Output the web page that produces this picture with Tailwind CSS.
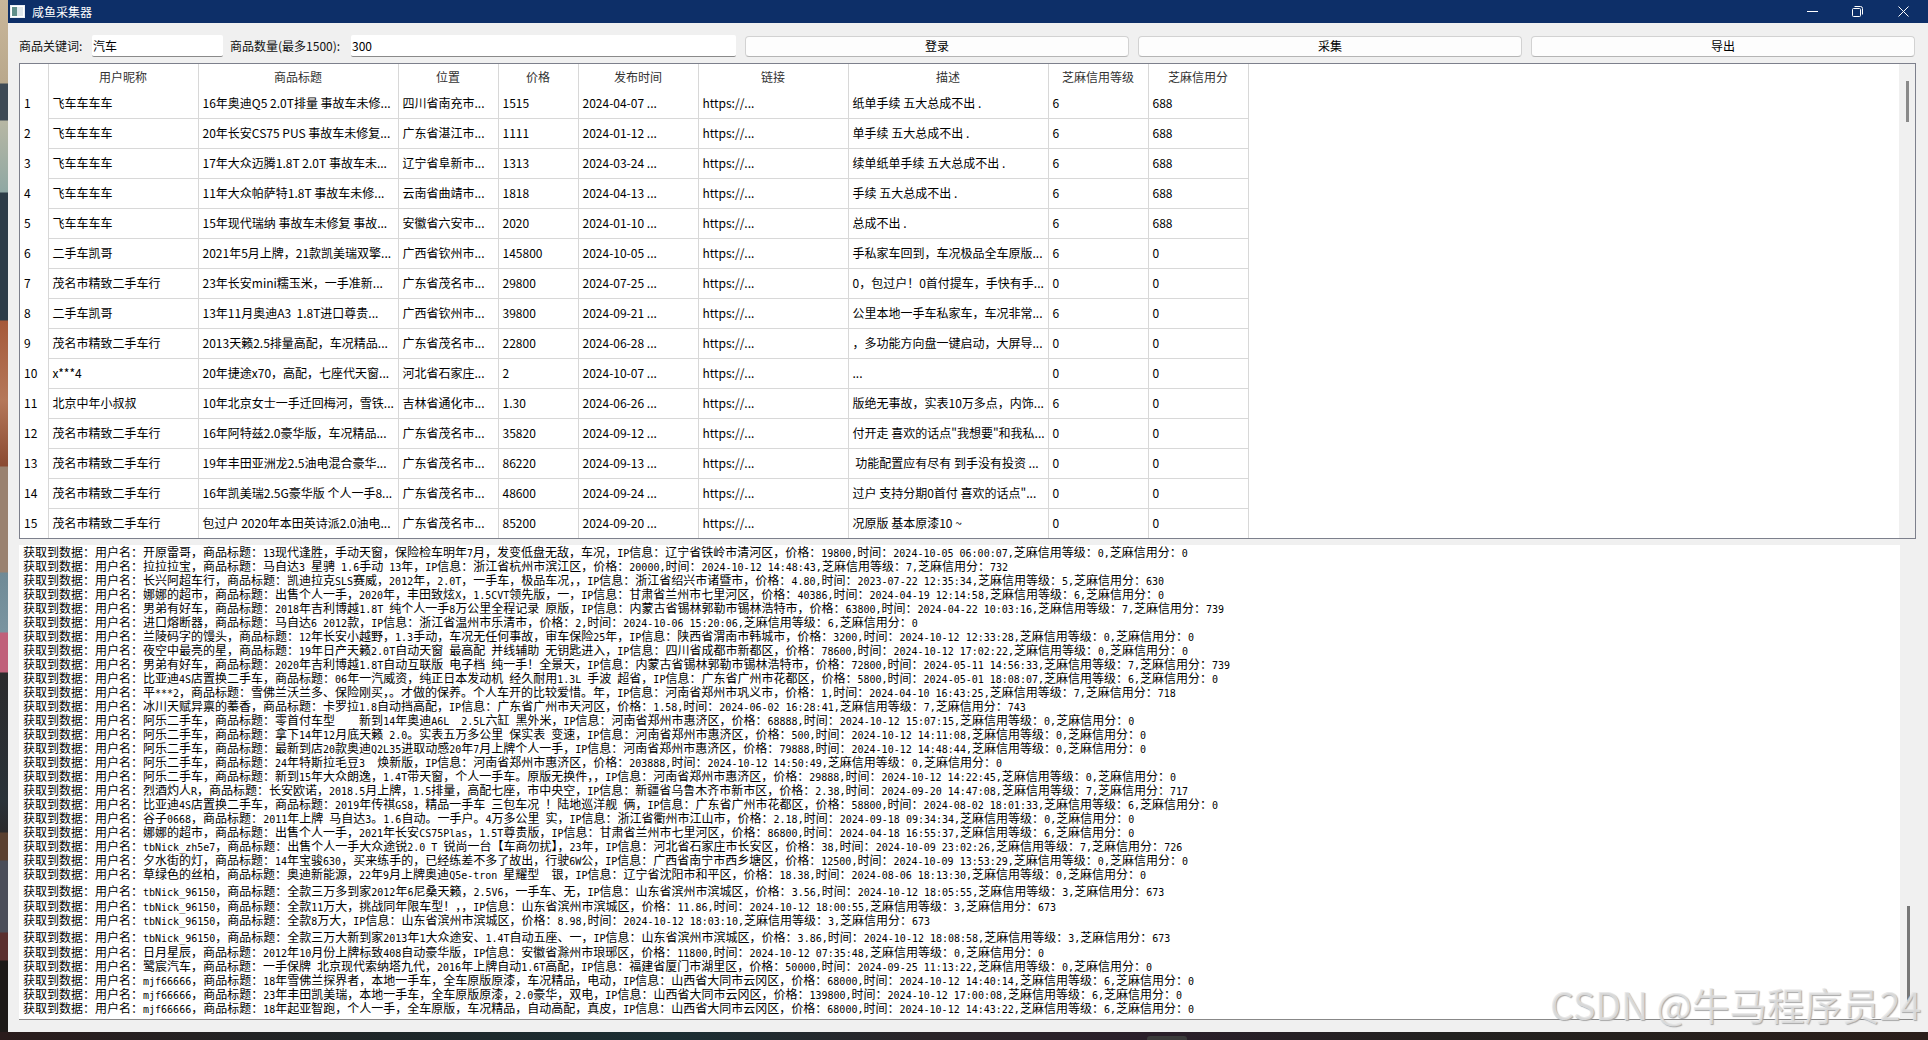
<!DOCTYPE html>
<html lang="zh-CN">
  <head>
    <meta charset="UTF-8" />
    <title>咸鱼采集器</title>
    <script src="https://cdn.jsdelivr.net/npm/@tailwindcss/browser@4"></script>
  </head>
  <body class="relative w-[1928px] h-[1040px] overflow-hidden bg-[#1d1a18] text-[12px] text-black font-['Noto_Sans_CJK_SC','DejaVu_Sans',sans-serif]">
    <div class="flex h-[1032px]">
      <!-- wallpaper showing on the left of the window -->
      <div class="w-[8px] shrink-0 bg-[linear-gradient(180deg,#c9b79a_0px,#b9a88c_83px,#3e4a55_84px,#3e4a55_120px,#b7b7a4_121px,#8fa8a4_192px,#2d3d48_193px,#2d3d48_320px,#a5593a_321px,#b5785a_400px,#8a4a32_466px,#9a8270_467px,#9a8270_572px,#6f8a96_573px,#7a94a0_632px,#c0607a_633px,#c0607a_672px,#2b2a2c_673px,#2a3238_800px,#2b2a2c_832px,#5a4030_833px,#5a4030_860px,#4a4d58_861px,#4a4d58_932px,#5a2f2e_933px,#5a2f2e_960px,#1d1a18_961px)]"></div>

      <div class="w-[1920px] flex flex-col bg-[#f0f0f0]">
        <!-- title bar -->
        <div class="h-[23px] shrink-0 flex items-center bg-[#0d2f68] text-white">
          <svg class="ml-[2px] w-[15px] h-[13px]" viewBox="0 0 15 13">
            <rect x="0.5" y="0.5" width="14" height="12" fill="#fff" stroke="#e8eef5" />
            <rect x="2" y="2" width="5" height="9" fill="#5f8f8a" />
            <rect x="7" y="2" width="6" height="9" fill="#dfe8ec" />
          </svg>
          <span class="ml-[7px]">咸鱼采集器</span>
          <div class="ml-auto flex items-center">
            <svg class="w-[11px] h-[11px] mr-[34px]" viewBox="0 0 11 11">
              <path d="M0 5.5H11" stroke="#fff" fill="none" />
            </svg>
            <svg class="w-[11px] h-[11px] mr-[35px]" viewBox="0 0 11 11">
              <rect x="0.5" y="2.5" width="8" height="8" rx="1" stroke="#fff" fill="none" />
              <path d="M2.5 0.5H8.5A2 2 0 0 1 10.5 2.5V8.5" stroke="#fff" fill="none" />
            </svg>
            <svg class="w-[11px] h-[11px] mr-[19px]" viewBox="0 0 11 11">
              <path d="M0.5 0.5L10.5 10.5M10.5 0.5L0.5 10.5" stroke="#fff" fill="none" />
            </svg>
          </div>
        </div>

        <!-- toolbar -->
        <div class="flex items-center h-[22px] mt-[12px] ml-[11px] shrink-0">
          <label class="w-[73px] text-[#111]">商品关键词:</label>
          <input class="w-[131px] h-[22px] pl-[1px] bg-white border-b border-[#8a8a8a] rounded-[2px] outline-none" value="汽车" />
          <label class="w-[121px] ml-[7px] text-[#111]">商品数量(最多1500):</label>
          <input class="w-[385px] h-[22px] pl-[1px] bg-white border-b border-[#8a8a8a] rounded-[2px] outline-none" value="300" />
          <div class="flex gap-[9px] ml-[9px]">
            <button class="w-[384px] h-[21px] bg-[#fdfdfd] border border-[#d2d2d2] border-b-[#b5b5b5] rounded-[4px]">登录</button>
            <button class="w-[384px] h-[21px] bg-[#fdfdfd] border border-[#d2d2d2] border-b-[#b5b5b5] rounded-[4px]">采集</button>
            <button class="w-[384px] h-[21px] bg-[#fdfdfd] border border-[#d2d2d2] border-b-[#b5b5b5] rounded-[4px]">导出</button>
          </div>
        </div>

        <!-- result table -->
        <div class="flex h-[476px] w-[1897px] mt-[6px] ml-[11px] shrink-0 bg-white border border-[#7d808c]">
          <div class="flex-1 overflow-hidden">
            <table class="table-fixed border-collapse w-[1228px]">
              <colgroup>
                <col class="w-[28px]" /><col class="w-[150px]" /><col class="w-[200px]" /><col class="w-[100px]" /><col class="w-[80px]" />
                <col class="w-[120px]" /><col class="w-[150px]" /><col class="w-[200px]" /><col class="w-[100px]" /><col class="w-[100px]" />
              </colgroup>
              <thead>
                <tr id="table-head" class="h-[24px]"></tr>
              </thead>
              <tbody id="table-body"></tbody>
            </table>
          </div>
          <div class="w-[16px] shrink-0 bg-[#f0f0f0]">
            <div class="w-[3px] h-[41px] mt-[17px] ml-[7px] bg-[#8a8a8a]"></div>
          </div>
        </div>

        <!-- log output -->
        <div class="flex h-[475px] w-[1897px] mt-[6px] ml-[11px] shrink-0 bg-white border-b border-[#888]">
          <div id="log" class="flex-1 pl-[4px]"></div>
          <div class="w-[16px] shrink-0 bg-[#f0f0f0]">
            <div class="w-[3px] h-[96px] mt-[361px] ml-[7px] bg-[#777]"></div>
          </div>
        </div>
      </div>
    </div>

    <!-- wallpaper / taskbar below the window -->
    <div class="h-[8px] bg-[linear-gradient(90deg,#2a1c1c,#1e2628_20%,#1b2e33_35%,#2a2428_48%,#2a1f2a_60%,#22211f_75%,#2a1e1a)]"></div>
    <div class="absolute left-[1147px] top-[1036px] w-[40px] h-[4px] rounded-t-[3px] bg-[#3b3b3b]"></div>

    <!-- watermark -->
    <div class="absolute left-[1550px] top-[982px] text-[37.5px] leading-[44px] whitespace-nowrap text-[#e6e6e6]/80 [text-shadow:1px_1px_1px_#a8a8a8]">CSDN @牛马程序员24</div>

    <script>
      const headers = ["", "用户昵称", "商品标题", "位置", "价格", "发布时间", "链接", "描述", "芝麻信用等级", "芝麻信用分"];
      const rows = [
        ["飞车车车车", "16年奥迪Q5 2.0T排量 事故车未修...", "四川省南充市...", "1515", "2024-04-07 ...", "纸单手续 五大总成不出 .", "6", "688"],
        ["飞车车车车", "20年长安CS75 PUS 事故车未修复...", "广东省湛江市...", "1111", "2024-01-12 ...", "单手续 五大总成不出 .", "6", "688"],
        ["飞车车车车", "17年大众迈腾1.8T 2.0T 事故车未...", "辽宁省阜新市...", "1313", "2024-03-24 ...", "续单纸单手续 五大总成不出 .", "6", "688"],
        ["飞车车车车", "11年大众帕萨特1.8T 事故车未修...", "云南省曲靖市...", "1818", "2024-04-13 ...", "手续 五大总成不出 .", "6", "688"],
        ["飞车车车车", "15年现代瑞纳 事故车未修复 事故...", "安徽省六安市...", "2020", "2024-01-10 ...", "总成不出 .", "6", "688"],
        ["二手车凯哥", "2021年5月上牌，21款凯美瑞双擎...", "广西省钦州市...", "145800", "2024-10-05 ...", "手私家车回到，车况极品全车原版...", "6", "0"],
        ["茂名市精致二手车行", "23年长安mini糯玉米，一手准新...", "广东省茂名市...", "29800", "2024-07-25 ...", "0，包过户！0首付提车，手快有手...", "0", "0"],
        ["二手车凯哥", "13年11月奥迪A3  1.8T进口尊贵...", "广西省钦州市...", "39800", "2024-09-21 ...", "公里本地一手车私家车，车况非常...", "6", "0"],
        ["茂名市精致二手车行", "2013天籁2.5排量高配，车况精品...", "广东省茂名市...", "22800", "2024-06-28 ...", "，多功能方向盘一键启动，大屏导...", "0", "0"],
        ["x***4", "20年捷途x70，高配，七座代天窗...", "河北省石家庄...", "2", "2024-10-07 ...", "...", "0", "0"],
        ["北京中年小叔叔", "10年北京女士一手迁回梅河，雪铁...", "吉林省通化市...", "1.30", "2024-06-26 ...", "版绝无事故，实表10万多点，内饰...", "6", "0"],
        ["茂名市精致二手车行", "16年阿特兹2.0豪华版，车况精品...", "广东省茂名市...", "35820", "2024-09-12 ...", "付开走 喜欢的话点\"我想要\"和我私...", "0", "0"],
        ["茂名市精致二手车行", "19年丰田亚洲龙2.5油电混合豪华...", "广东省茂名市...", "86220", "2024-09-13 ...", " 功能配置应有尽有 到手没有投资 ...", "0", "0"],
        ["茂名市精致二手车行", "16年凯美瑞2.5G豪华版 个人一手8...", "广东省茂名市...", "48600", "2024-09-24 ...", "过户 支持分期0首付 喜欢的话点\"...", "0", "0"],
        ["茂名市精致二手车行", "包过户 2020年本田英诗派2.0油电...", "广东省茂名市...", "85200", "2024-09-20 ...", "况原版 基本原漆10 ~", "0", "0"],
      ];

      // 用户名, 商品标题, IP信息, 价格, 时间, 等级, 分, 行距 class
      const logs = [
        ["开原雷哥", "13现代逢胜，手动天窗，保险检车明年7月，发变低盘无敌，车况", "辽宁省铁岭市清河区", "19800", "2024-10-05 06:00:07", "0", "0"],
        ["拉拉拉宝", "马自达3 星骋 1.6手动 13年", "浙江省杭州市滨江区", "20000", "2024-10-12 14:48:43", "7", "732"],
        ["长兴阿超车行", "凯迪拉克SLS赛威，2012年，2.0T，一手车，极品车况，", "浙江省绍兴市诸暨市", "4.80", "2023-07-22 12:35:34", "5", "630"],
        ["娜娜的超市", "出售个人一手，2020年，丰田致炫X，1.5CVT领先版，一", "甘肃省兰州市七里河区", "40386", "2024-04-19 12:14:58", "6", "0"],
        ["男弟有好车", "2018年吉利博越1.8T 纯个人一手8万公里全程记录 原版", "内蒙古省锡林郭勒市锡林浩特市", "63800", "2024-04-22 10:03:16", "7", "739"],
        ["进口熔断器", "马自达6 2012款", "浙江省温州市乐清市", "2", "2024-10-06 15:20:06", "6", "0"],
        ["兰陵码字的馒头", "12年长安小越野，1.3手动，车况无任何事故，审车保险25年", "陕西省渭南市韩城市", "3200", "2024-10-12 12:33:28", "0", "0"],
        ["夜空中最亮的星", "19年日产天籁2.0T自动天窗 最高配 并线辅助 无钥匙进入", "四川省成都市新都区", "78600", "2024-10-12 17:02:22", "0", "0"],
        ["男弟有好车", "2020年吉利博越1.8T自动互联版 电子档 纯一手！全景天", "内蒙古省锡林郭勒市锡林浩特市", "72800", "2024-05-11 14:56:33", "7", "739"],
        ["比亚迪4S店置换二手车", "06年一汽威资，纯正日本发动机 经久耐用1.3L 手波 超省", "广东省广州市花都区", "5800", "2024-05-01 18:08:07", "6", "0"],
        ["平***2", "雪佛兰沃兰多、保险刚买，。才做的保养。个人车开的比较爱惜。年", "河南省郑州市巩义市", "1", "2024-04-10 16:43:25", "7", "718"],
        ["冰川天赋异禀的蓁香", "卡罗拉1.8自动挡高配", "广东省广州市天河区", "1.58", "2024-06-02 16:28:41", "7", "743"],
        ["阿乐二手车", "零首付车型    新到14年奥迪A6L  2.5L六缸 黑外米", "河南省郑州市惠济区", "68888", "2024-10-12 15:07:15", "0", "0"],
        ["阿乐二手车", "拿下14年12月底天籁 2.0。实表五万多公里 保实表 变速", "河南省郑州市惠济区", "500", "2024-10-12 14:11:08", "0", "0"],
        ["阿乐二手车", "最新到店20款奥迪Q2L35进取动感20年7月上牌个人一手", "河南省郑州市惠济区", "79888", "2024-10-12 14:48:44", "0", "0"],
        ["阿乐二手车", "24年特斯拉毛豆3  焕新版", "河南省郑州市惠济区", "203888", "2024-10-12 14:50:49", "0", "0"],
        ["阿乐二手车", "新到15年大众朗逸，1.4T带天窗，个人一手车。原版无换件，", "河南省郑州市惠济区", "29888", "2024-10-12 14:22:45", "0", "0"],
        ["烈酒灼人R", "长安欧诺，2018.5月上牌，1.5排量，高配七座，市中央空", "新疆省乌鲁木齐市新市区", "2.38", "2024-09-20 14:47:08", "7", "717"],
        ["比亚迪4S店置换二手车", "2019年传祺GS8，精品一手车 三包车况 ！陆地巡洋舰 俩", "广东省广州市花都区", "58800", "2024-08-02 18:01:33", "6", "0"],
        ["谷子0668", "2011年上牌 马自达3。1.6自动。一手户。4万多公里 实", "浙江省衢州市江山市", "2.18", "2024-09-18 09:34:34", "0", "0"],
        ["娜娜的超市", "出售个人一手，2021年长安CS75Plas，1.5T尊贵版", "甘肃省兰州市七里河区", "86800", "2024-04-18 16:55:37", "6", "0"],
        ["tbNick_zh5e7", "出售个人一手大众途锐2.0 T 锐尚一台【车商勿扰】，23年", "河北省石家庄市长安区", "38", "2024-10-09 23:02:26", "7", "726"],
        ["夕水街的灯", "14年宝骏630，买来练手的，已经练差不多了故出，行驶6W公", "广西省南宁市西乡塘区", "12500", "2024-10-09 13:53:29", "0", "0"],
        ["草绿色的丝柏", "奥迪新能源，22年9月上牌奥迪Q5e-tron 星耀型  银", "辽宁省沈阳市和平区", "18.38", "2024-08-06 18:13:30", "0", "0"],
        ["tbNick_96150", "全款三万多到家2012年6尼桑天籁，2.5V6，一手车、无", "山东省滨州市滨城区", "3.56", "2024-10-12 18:05:55", "3", "673", "mt-[3px]"],
        ["tbNick_96150", "全款11万大，挑战同年限车型！，", "山东省滨州市滨城区", "11.86", "2024-10-12 18:00:55", "3", "673", "mt-[1px]"],
        ["tbNick_96150", "全款8万大", "山东省滨州市滨城区", "8.98", "2024-10-12 18:03:10", "3", "673"],
        ["tbNick_96150", "全款三万大新到家2013年1大众途安、1.4T自动五座、一", "山东省滨州市滨城区", "3.86", "2024-10-12 18:08:58", "3", "673", "mt-[3px]"],
        ["日月星辰", "2012年10月份上牌标致408自动豪华版", "安徽省滁州市琅琊区", "11800", "2024-10-12 07:35:48", "0", "0", "mt-[1px]"],
        ["鹭宸汽车", "一手保牌 北京现代索纳塔九代，2016年上牌自动1.6T高配", "福建省厦门市湖里区", "50000", "2024-09-25 11:13:22", "0", "0"],
        ["mjf66666", "18年雪佛兰探界者，本地一手车，全车原版原漆，车况精品，电动", "山西省大同市云冈区", "68000", "2024-10-12 14:40:14", "6", "0"],
        ["mjf66666", "23年丰田凯美瑞，本地一手车，全车原版原漆，2.0豪华，双电", "山西省大同市云冈区", "139800", "2024-10-12 17:00:08", "6", "0"],
        ["mjf66666", "18年起亚智跑，个人一手，全车原版，车况精品，自动高配，真皮", "山西省大同市云冈区", "68000", "2024-10-12 14:43:22", "6", "0"],
      ];

      document.getElementById("table-head").innerHTML = headers
        .map((h) => `<th class="pt-[2px] font-normal text-[#333] text-center whitespace-nowrap border-r border-[#d8d8d8]">${h}</th>`)
        .join("");

      document.getElementById("table-body").innerHTML = rows
        .map((r, i) => {
          const cells = [r[0], r[1], r[2], r[3], r[4], "https://...", r[5], r[6], r[7]];
          const tds = cells
            .map((c) => `<td class="pl-[4px] pr-[2px] whitespace-pre overflow-hidden border-r border-b border-[#d8d8d8]">${c}</td>`)
            .join("");
          return `<tr class="h-[30px]"><td class="pl-[4px] border-r border-[#d8d8d8]">${i + 1}</td>${tds}</tr>`;
        })
        .join("");

      // SimSun style: ASCII runs are half width, so they go in a 10px mono span
      function halfWidth(text) {
        return text.replace(/[\x20-\x7e]+/g, (m) => `<span class="text-[10px] font-['DejaVu_Sans_Mono']">${m}</span>`);
      }

      document.getElementById("log").innerHTML = logs
        .map((l) => {
          const line = `获取到数据：用户名：${l[0]}，商品标题：${l[1]}，IP信息：${l[2]}，价格：${l[3]},时间：${l[4]},芝麻信用等级：${l[5]},芝麻信用分：${l[6]}`;
          return `<div class="h-[14px] leading-[14px] whitespace-pre ${l[7] || ""}">${halfWidth(line)}</div>`;
        })
        .join("");
    </script>
  </body>
</html>
